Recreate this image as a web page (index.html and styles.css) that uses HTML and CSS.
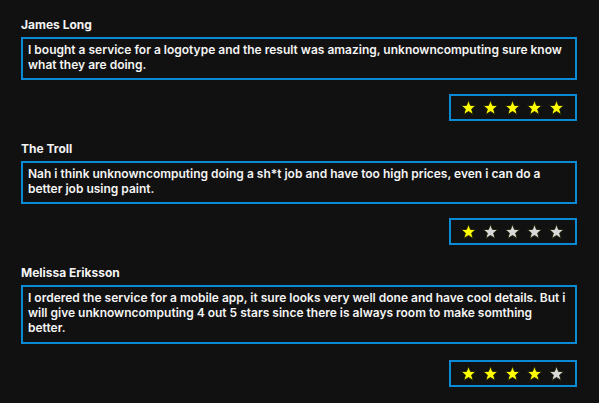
FILE: index.html
```html
<!DOCTYPE html>
<html lang="en">
<head>
<meta charset="utf-8">
<title>Reviews</title>
<link rel="stylesheet" href="styles.css">
</head>
<body>
<main class="reviews">
  <section class="review">
    <h2 class="review-name">James Long</h2>
    <p class="review-text">I bought a service for a logotype and the result was amazing, unknowncomputing sure know what they are doing.</p>
    <div class="rating">
      <svg class="star on" viewBox="0 0 24 24"><polygon points="12,0.8 15.2,8.6 23.5,9 17,14.4 19.3,23 12,18.4 4.7,23 7,14.4 0.5,9 8.8,8.6"/></svg>
      <svg class="star on" viewBox="0 0 24 24"><polygon points="12,0.8 15.2,8.6 23.5,9 17,14.4 19.3,23 12,18.4 4.7,23 7,14.4 0.5,9 8.8,8.6"/></svg>
      <svg class="star on" viewBox="0 0 24 24"><polygon points="12,0.8 15.2,8.6 23.5,9 17,14.4 19.3,23 12,18.4 4.7,23 7,14.4 0.5,9 8.8,8.6"/></svg>
      <svg class="star on" viewBox="0 0 24 24"><polygon points="12,0.8 15.2,8.6 23.5,9 17,14.4 19.3,23 12,18.4 4.7,23 7,14.4 0.5,9 8.8,8.6"/></svg>
      <svg class="star on" viewBox="0 0 24 24"><polygon points="12,0.8 15.2,8.6 23.5,9 17,14.4 19.3,23 12,18.4 4.7,23 7,14.4 0.5,9 8.8,8.6"/></svg>
    </div>
  </section>
  <section class="review">
    <h2 class="review-name">The Troll</h2>
    <p class="review-text">Nah i think unknowncomputing doing a sh*t job and have too high prices, even i can do a better job using paint.</p>
    <div class="rating">
      <svg class="star on" viewBox="0 0 24 24"><polygon points="12,0.8 15.2,8.6 23.5,9 17,14.4 19.3,23 12,18.4 4.7,23 7,14.4 0.5,9 8.8,8.6"/></svg>
      <svg class="star off" viewBox="0 0 24 24"><polygon points="12,0.8 15.2,8.6 23.5,9 17,14.4 19.3,23 12,18.4 4.7,23 7,14.4 0.5,9 8.8,8.6"/></svg>
      <svg class="star off" viewBox="0 0 24 24"><polygon points="12,0.8 15.2,8.6 23.5,9 17,14.4 19.3,23 12,18.4 4.7,23 7,14.4 0.5,9 8.8,8.6"/></svg>
      <svg class="star off" viewBox="0 0 24 24"><polygon points="12,0.8 15.2,8.6 23.5,9 17,14.4 19.3,23 12,18.4 4.7,23 7,14.4 0.5,9 8.8,8.6"/></svg>
      <svg class="star off" viewBox="0 0 24 24"><polygon points="12,0.8 15.2,8.6 23.5,9 17,14.4 19.3,23 12,18.4 4.7,23 7,14.4 0.5,9 8.8,8.6"/></svg>
    </div>
  </section>
  <section class="review review--long">
    <h2 class="review-name">Melissa Eriksson</h2>
    <p class="review-text">I ordered the service for a mobile app, it sure looks very well done and have cool details. But i will give unknowncomputing 4 out 5 stars since there is always room to make somthing better.</p>
    <div class="rating">
      <svg class="star on" viewBox="0 0 24 24"><polygon points="12,0.8 15.2,8.6 23.5,9 17,14.4 19.3,23 12,18.4 4.7,23 7,14.4 0.5,9 8.8,8.6"/></svg>
      <svg class="star on" viewBox="0 0 24 24"><polygon points="12,0.8 15.2,8.6 23.5,9 17,14.4 19.3,23 12,18.4 4.7,23 7,14.4 0.5,9 8.8,8.6"/></svg>
      <svg class="star on" viewBox="0 0 24 24"><polygon points="12,0.8 15.2,8.6 23.5,9 17,14.4 19.3,23 12,18.4 4.7,23 7,14.4 0.5,9 8.8,8.6"/></svg>
      <svg class="star on" viewBox="0 0 24 24"><polygon points="12,0.8 15.2,8.6 23.5,9 17,14.4 19.3,23 12,18.4 4.7,23 7,14.4 0.5,9 8.8,8.6"/></svg>
      <svg class="star off" viewBox="0 0 24 24"><polygon points="12,0.8 15.2,8.6 23.5,9 17,14.4 19.3,23 12,18.4 4.7,23 7,14.4 0.5,9 8.8,8.6"/></svg>
    </div>
  </section>
</main>
</body>
</html>
```

FILE: styles.css
```css
html, body {
  margin: 0;
  padding: 0;
  background: #111111;
  height: 100%;
}

body {
  font-family: Inter, "Noto Sans", sans-serif;
  color: #f4f4f4;
  overflow: hidden;
}

.reviews {
  display: flex;
  flex-direction: column;
  gap: 20px;
  padding: 17px 22px 0 21px;
}

.review {
  display: flex;
  flex-direction: column;
}

.review-name {
  margin: 0 0 5px 0;
  font-size: 12px;
  line-height: 15px;
  font-weight: 700;
}

.review-text {
  margin: 0;
  border: 2px solid #0b8ad6;
  padding: 3px 6px 6px 5px;
  font-size: 12px;
  line-height: 15px;
  font-weight: 600;
}

.rating {
  align-self: flex-end;
  margin-top: 14px;
  display: flex;
  gap: 7px;
  padding: 4px 11px 4px 10px;
  border: 2px solid #0b8ad6;
}

.review--long .review-text {
  padding-bottom: 7px;
}

.review--long .rating {
  margin-top: 16px;
}

.star {
  flex: 0 0 auto;
  width: 15px;
  height: 15px;
  display: block;
  overflow: visible;
}

.star polygon {
  stroke: #1a1a00;
  stroke-width: 1.4;
  stroke-linejoin: round;
}

.star.on polygon {
  fill: #ffff00;
}

.star.off polygon {
  fill: #d8d8d8;
}
```
